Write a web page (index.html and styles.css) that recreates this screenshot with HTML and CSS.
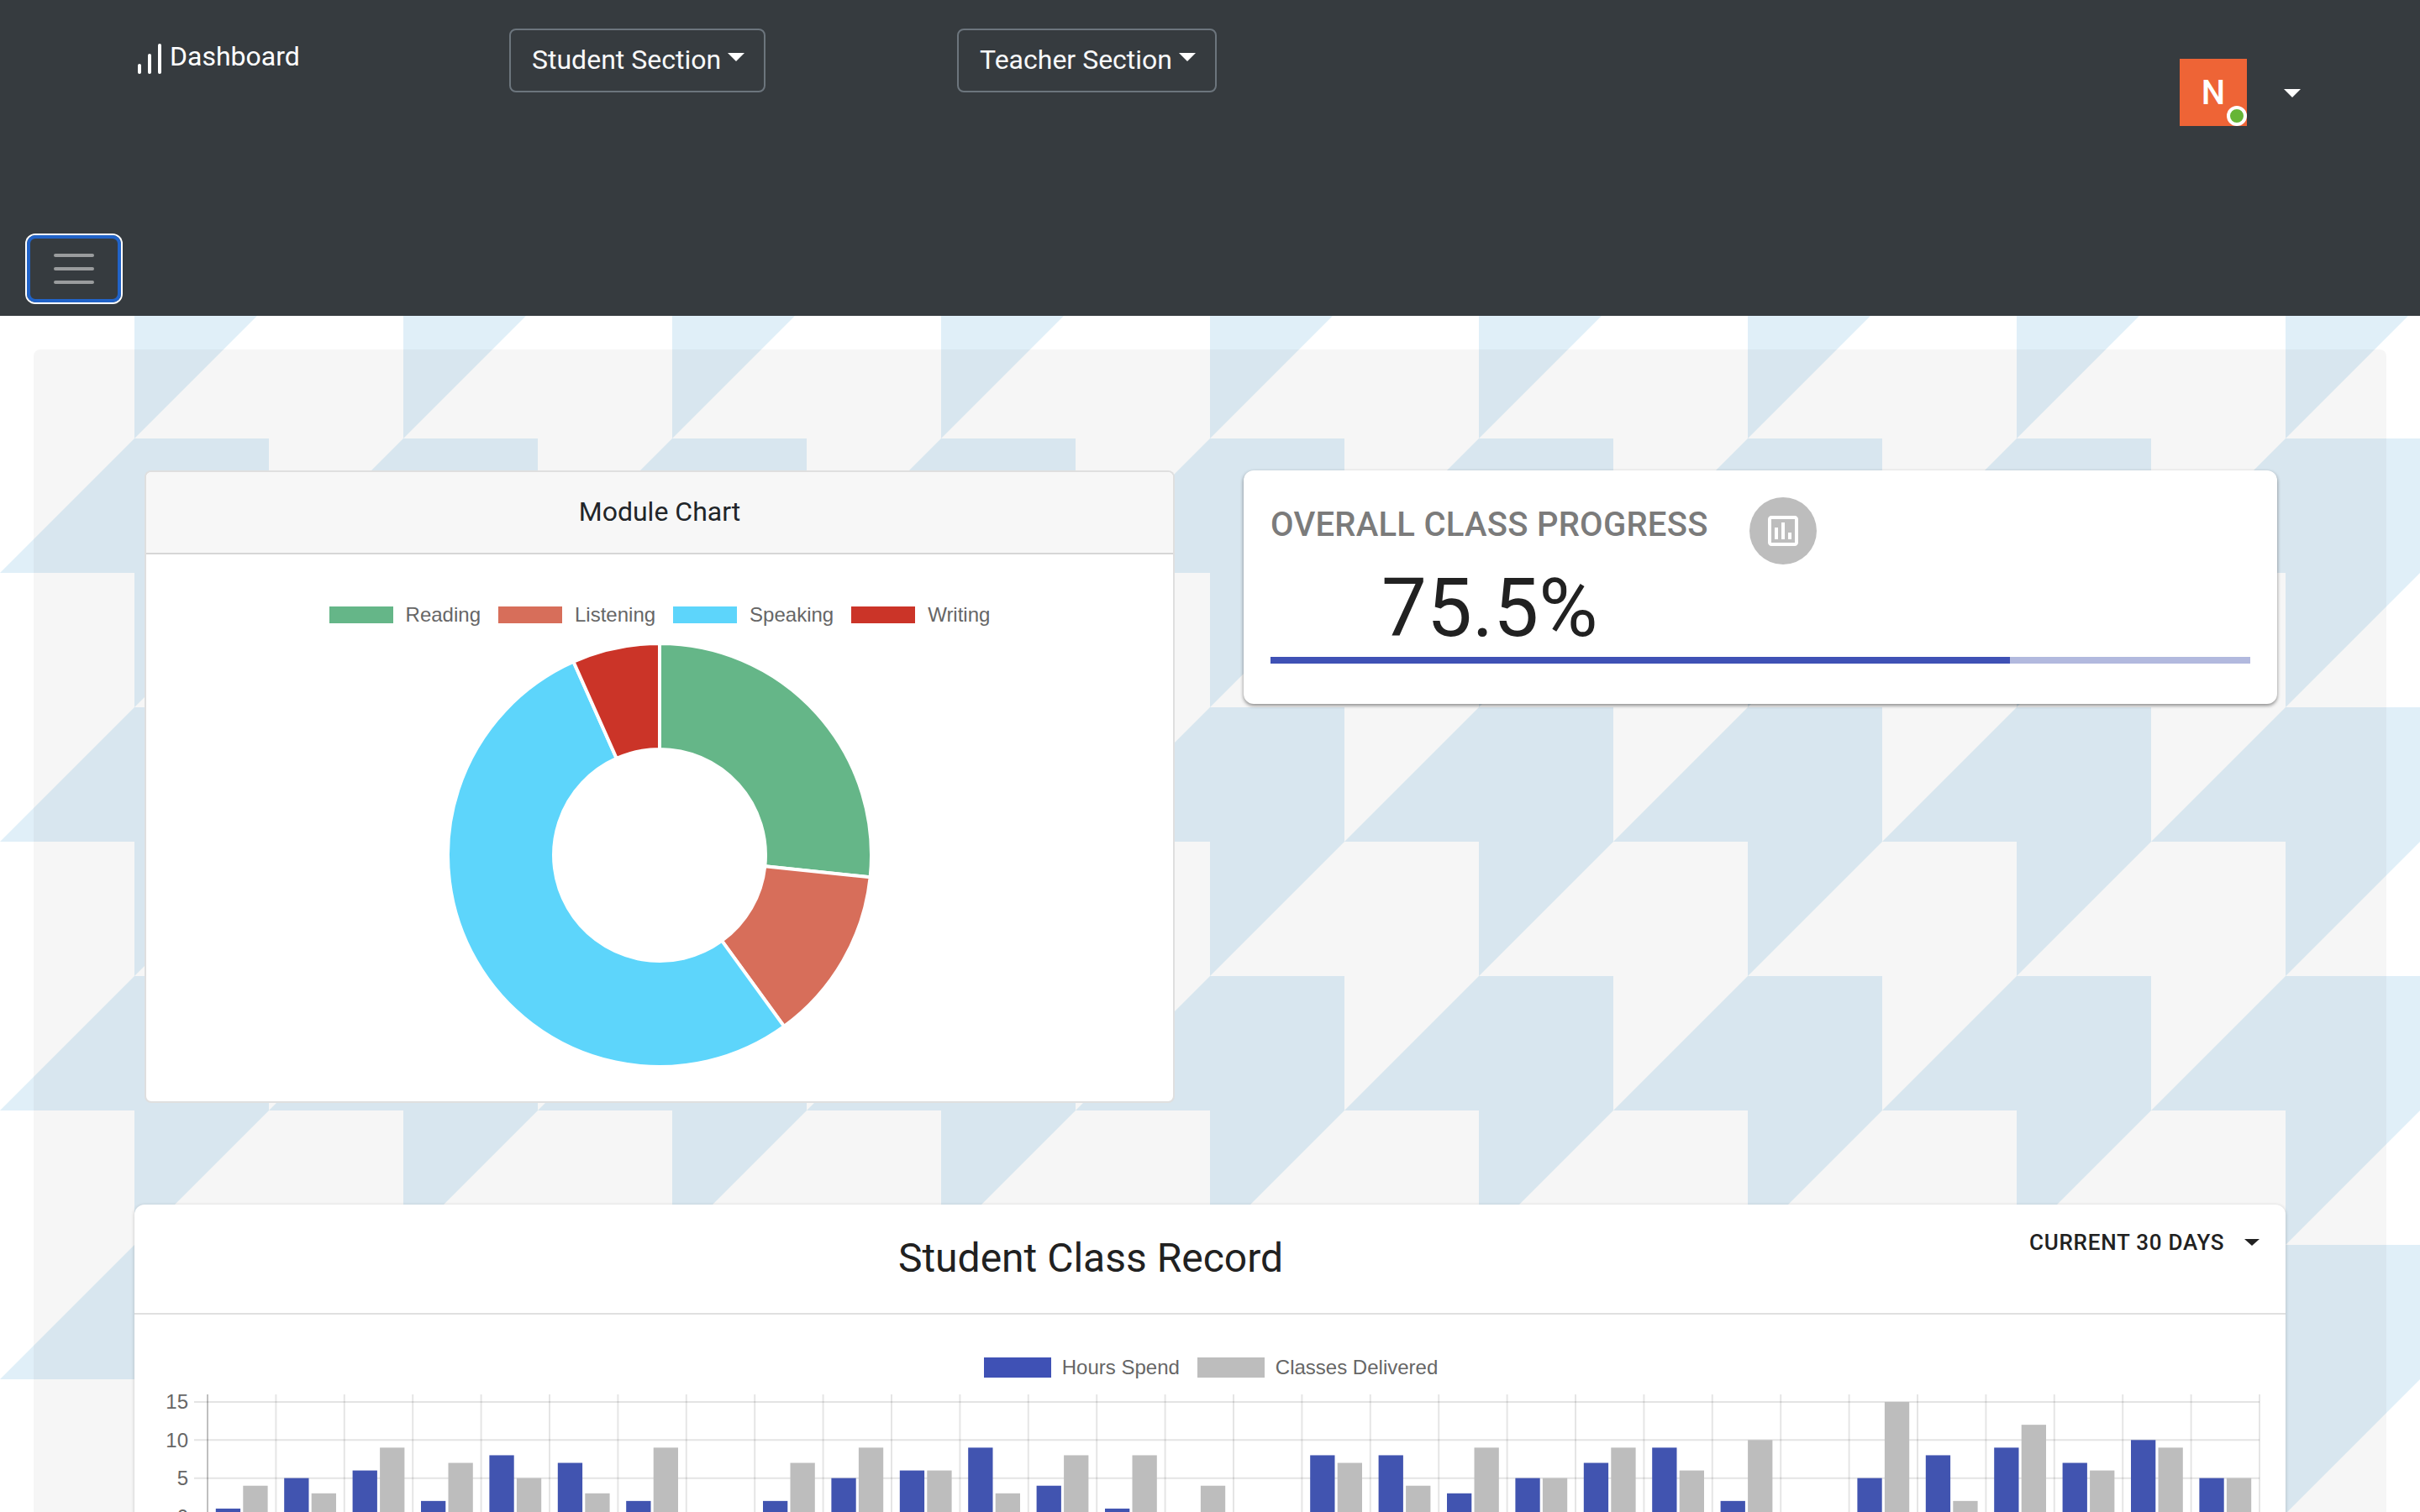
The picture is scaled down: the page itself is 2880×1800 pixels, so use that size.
FILE: index.html
```html
<!DOCTYPE html>
<html lang="en">
<head>
    <meta charset="UTF-8">
    <meta name="viewport" content="width=device-width, initial-scale=1.0">
    <title>Dashboard</title>
    <link rel="stylesheet" href="styles.css">
</head>
<body>
    <nav class="topbar">
        <div class="topbar-row">
            <a class="brand">
                <svg class="brand-icon" viewBox="0 0 24 24"><line x1="12" y1="20" x2="12" y2="10"/><line x1="18" y1="20" x2="18" y2="4"/><line x1="6" y1="20" x2="6" y2="16"/></svg>
                <span>Dashboard</span>
            </a>
            <button class="nav-btn">Student Section<i class="caret"></i></button>
            <button class="nav-btn teacher-btn">Teacher Section<i class="caret"></i></button>
            <div class="user">
                <div class="avatar">N<span class="status"></span></div>
                <i class="caret user-caret"></i>
            </div>
        </div>
        <button class="toggler"><span></span><span></span><span></span></button>
    </nav>

    <main class="page">
        <div class="panel">
            <div class="top-cards">
                <section class="card module-card">
                    <header class="module-header">Module Chart</header>
                    <div class="module-body">
                        <ul class="legend">
                            <li><i class="swatch swatch-reading"></i>Reading</li>
                            <li><i class="swatch swatch-listening"></i>Listening</li>
                            <li><i class="swatch swatch-speaking"></i>Speaking</li>
                            <li><i class="swatch swatch-writing"></i>Writing</li>
                        </ul>
                        <svg class="donut" viewBox="-255 -255 510 510">
                            <path class="seg-reading" d="M0 -252A252 252 0 0 1 250.62 26.34L125.31 13.17A126 126 0 0 0 0 -126Z"/>
                            <path class="seg-listening" d="M250.62 26.34A252 252 0 0 1 148.12 203.87L74.06 101.94A126 126 0 0 0 125.31 13.17Z"/>
                            <path class="seg-speaking" d="M148.12 203.87A252 252 0 1 1 -102.5 -230.22L-51.25 -115.11A126 126 0 1 0 74.06 101.94Z"/>
                            <path class="seg-writing" d="M-102.5 -230.22A252 252 0 0 1 0 -252L0 -126A126 126 0 0 0 -51.25 -115.11Z"/>
                        </svg>
                    </div>
                </section>

                <section class="card progress-card">
                    <div class="progress-head">
                        <h3 class="progress-title">OVERALL CLASS PROGRESS</h3>
                        <div class="progress-icon">
                            <svg viewBox="0 0 24 24"><path d="M19 3H5c-1.1 0-2 .9-2 2v14c0 1.1.9 2 2 2h14c1.1 0 2-.9 2-2V5c0-1.1-.9-2-2-2zm0 16H5V5h14v14zM7 10h2v7H7zm4-3h2v10h-2zm4 6h2v4h-2z"/></svg>
                        </div>
                    </div>
                    <div class="progress-value">75.5%</div>
                    <div class="progress-track"><div class="progress-fill"></div></div>
                </section>
            </div>

            <section class="card record-card">
                <header class="record-header">
                    <h2 class="record-title">Student Class Record</h2>
                    <div class="record-range">CURRENT 30 DAYS<i class="caret range-caret"></i></div>
                </header>
                <div class="record-body">
                    <ul class="legend bar-legend">
                        <li><i class="swatch swatch-hours"></i>Hours Spend</li>
                        <li><i class="swatch swatch-classes"></i>Classes Delivered</li>
                    </ul>
                    <svg id="barChart" class="bar-chart" viewBox="160 1640 2560 180"></svg>
                </div>
            </section>
        </div>
    </main>

    <script src="chart.js"></script>
</body>
</html>
```

FILE: styles.css
```css
* { box-sizing: border-box; }
html, body { height: 1800px; overflow: hidden; }
body { margin: 0; font-family: Roboto, sans-serif; font-size: 32px; color: #212529; background-color: #fff; }
ul { list-style: none; margin: 0; padding: 0; }
h2, h3 { margin: 0; font-weight: 400; }

/* top bar */
.topbar { height: 376px; padding: 34px 0 0 30px; background-color: #363b3f; }
.topbar-row { display: flex; align-items: flex-start; height: 244px; }
.brand { display: flex; align-items: flex-start; width: 576px; padding: 12px 0 0 124px; color: #fff; }
.brand-icon { width: 48px; height: 48px; fill: none; stroke: #fff; stroke-width: 2; stroke-linecap: round; }
.brand span { line-height: 48px; margin-top: -3px; }
.nav-btn { display: flex; align-items: center; padding: 11px 23px 13px 25px; font: 400 32px/48px Roboto, sans-serif; color: #f8f9fa; background: transparent; border: 2px solid #6c757d; border-radius: 8px; }
.teacher-btn { margin-left: 228px; }
.caret { display: inline-block; width: 0; height: 0; margin-left: 8px; margin-top: -6px; border-top: 10px solid #fff; border-left: 10px solid transparent; border-right: 10px solid transparent; }
.user { display: flex; align-items: center; margin: 36px 142px 0 auto; }
.avatar { position: relative; width: 80px; height: 80px; font: 500 40px/82px Roboto, sans-serif; text-align: center; color: #fff; background-color: #ee6436; }
.status { position: absolute; right: 0; bottom: 0; width: 24px; height: 24px; background-color: #66b536; border: 4px solid #fff; border-radius: 50%; }
.user-caret { margin: 2px 0 0 44px; }
.toggler { display: flex; flex-direction: column; align-items: center; justify-content: center; gap: 12px; width: 112px; height: 80px; margin: 2px 0 0 2px; padding: 0; background: transparent; border: 4px solid #2163c8; border-radius: 10px; box-shadow: 0 0 0 2px #fff; }
.toggler span { width: 48px; height: 4px; background-color: #9a9c9e; border-radius: 2px; }

/* page background */
.page { height: 1424px; padding: 40px 40px 0; background-image: url("data:image/svg+xml,%3Csvg xmlns='http://www.w3.org/2000/svg' width='320' height='320'%3E%3Cpath fill='%23e0eff8' d='M160 0H320L160 160ZM160 160H320V320H0Z'/%3E%3C/svg%3E"); background-size: 320px 320px; background-position: 0 -14px; }
.panel { height: 1500px; padding-top: 144px; background-color: rgba(0, 0, 0, .035); border-radius: 8px; }
.top-cards { display: flex; align-items: flex-start; gap: 82px; padding-left: 132px; }
.card { background-color: #fff; }

/* module chart */
.module-card { width: 1226px; height: 753px; border: 2px solid rgba(0, 0, 0, .125); border-radius: 8px; }
.module-header { height: 98px; line-height: 94px; text-align: center; color: #212529; background-color: #f7f7f7; border-bottom: 2px solid #d6d6d6; border-radius: 6px 6px 0 0; }
.module-body { display: flex; flex-direction: column; align-items: center; padding-top: 62px; }
.legend { display: flex; align-items: center; gap: 21px; font: 24px/20px "Liberation Sans", Arial, sans-serif; color: #666; }
.legend li { display: flex; align-items: center; }
.swatch { width: 76px; height: 20px; margin-right: 15px; }
.swatch-reading { background-color: #65b688; }
.swatch-listening { background-color: #d76e5a; }
.swatch-speaking { background-color: #5dd5fb; }
.swatch-writing { background-color: #cb3428; }
.donut { display: block; width: 510px; height: 510px; margin-top: 21px; }
.donut path { stroke: #fff; stroke-width: 4; }
.seg-reading { fill: #65b688; }
.seg-listening { fill: #d76e5a; }
.seg-speaking { fill: #5dd5fb; }
.seg-writing { fill: #cb3428; }

/* overall progress */
.progress-card { width: 1230px; height: 278px; padding: 32px; border-radius: 12px; box-shadow: 0 2px 4px rgba(0, 0, 0, .45); }
.progress-head { display: flex; align-items: flex-start; gap: 49px; height: 80px; }
.progress-title { padding-top: 3px; font-size: 40px; line-height: 60px; font-weight: 500; letter-spacing: .25px; color: #7b7b7b; }
.progress-icon { display: flex; align-items: center; justify-content: center; width: 80px; height: 80px; background-color: #bdbdbd; border-radius: 50%; }
.progress-icon svg { width: 48px; height: 48px; fill: #fff; }
.progress-value { height: 110px; padding-left: 132px; font-size: 96px; line-height: 104px; font-weight: 400; color: #212121; }
.progress-track { height: 8px; background-color: #b2b9de; }
.progress-fill { width: 75.5%; height: 100%; background-color: #3f51b5; }

/* class record */
.record-card { width: 2560px; height: 800px; margin: 121px 0 0 120px; border-radius: 12px; box-shadow: 0 1px 4px rgba(0, 0, 0, .2); }
.record-header { display: flex; align-items: flex-start; height: 131px; border-bottom: 2px solid #e0e0e0; }
.record-title { flex: 1; padding: 28px 0 0 21px; font-size: 48px; line-height: 72px; text-align: center; color: #212121; }
.record-range { display: flex; align-items: center; width: 305px; padding: 24px 0 0 0; font-size: 26px; line-height: 42px; font-weight: 500; letter-spacing: .75px; color: #212121; }
.range-caret { margin: 0 0 0 24px; border-top-width: 8px; border-left-width: 9px; border-right-width: 9px; }
.range-caret { border-top-color: #212121; }
.record-body { padding-top: 51px; }
.bar-legend { justify-content: center; gap: 21px; padding-left: 2px; line-height: 24px; }
.bar-legend .swatch { width: 80px; height: 24px; margin-right: 13px; }
.swatch-hours { background-color: #3f51b5; }
.swatch-classes { background-color: #bdbdbd; }
.bar-chart { display: block; width: 2560px; height: 180px; }
.bar-chart text { font: 24px "Liberation Sans", Arial, sans-serif; fill: #666; text-anchor: end; }
.grid-h { stroke: #e4e4e4; stroke-width: 2; }
.grid-v { stroke: rgba(0, 0, 0, .1); stroke-width: 2; }
.grid-axis { stroke: rgba(0, 0, 0, .25); stroke-width: 2; }
.bar-hours { fill: #4154b0; }
.bar-classes { fill: #bdbdbd; }
```

FILE: chart.js
```js
// Student class record, one pair of values per day
var hours =   [1,5,6,2,8,7,2,0,2,5,6,9,4,1,0,0,8,8,3,5,7,9,2,0,5,8,9,7,10,5];
var classes = [4,3,9,7,5,3,9,0,7,9,6,3,8,8,4,0,7,4,9,5,9,6,10,0,15,2,12,6,9,5];

var svg = document.getElementById("barChart");
var left = 247, step = 81.4, bottom = 1805, unit = 9.07, top_ = 1660, right = left + step * 30;

function add(tag, attrs, text) {
    var el = document.createElementNS("http://www.w3.org/2000/svg", tag);
    for (var k in attrs) el.setAttribute(k, attrs[k]);
    if (text !== undefined) el.textContent = text;
    svg.appendChild(el);
}

for (var v = 0; v <= 15; v += 5) {
    var y = bottom - v * unit;
    add("line", { x1: left - 16, x2: right, y1: y, y2: y, class: "grid-h" });
    add("text", { x: 224, y: y + 8.5 }, v);
}

for (var i = 0; i <= 30; i++) {
    var x = left + step * i;
    add("line", { x1: x, x2: x, y1: top_, y2: bottom, class: i == 0 ? "grid-axis" : "grid-v" });
}

for (var j = 0; j < 30; j++) {
    var start = left + step * j;
    add("rect", { x: start + 9.8, y: bottom - hours[j] * unit, width: 29.3, height: hours[j] * unit, class: "bar-hours" });
    add("rect", { x: start + 42.3, y: bottom - classes[j] * unit, width: 29.3, height: classes[j] * unit, class: "bar-classes" });
}
```
